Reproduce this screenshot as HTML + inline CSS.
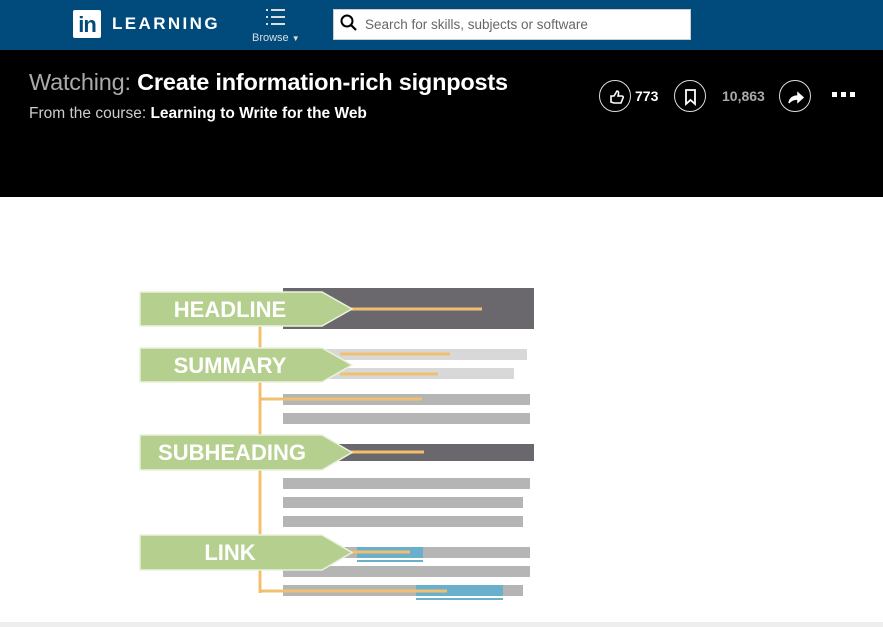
<!DOCTYPE html>
<html><head><style>
*{margin:0;padding:0;box-sizing:border-box}
body{width:883px;height:627px;overflow:hidden;background:#fff;font-family:"Liberation Sans",sans-serif;position:relative}
.hdr{position:absolute;left:0;top:0;width:883px;height:50px;background:#004b7c}
.blk{position:absolute;left:0;top:50px;width:883px;height:147px;background:#000}
.a{position:absolute}
.circ{position:absolute;width:32px;height:32px;border:1px solid #ddd;border-radius:50%;top:80px}
</style></head><body>
<div class="hdr">
  <div class="a" style="left:73px;top:10px;width:28px;height:28px;background:#fff;border-radius:2px;color:#004b7c;font-weight:bold;font-size:22px;line-height:30px;text-align:center;letter-spacing:-1px">in</div>
  <div class="a" style="left:112px;top:14px;color:#fff;font-size:17px;font-weight:bold;letter-spacing:2.4px">LEARNING</div>
  <svg class="a" style="left:266px;top:8px" width="20" height="18"><g fill="#ddd"><rect x="0" y="1" width="2" height="2"/><rect x="5" y="1" width="14" height="2"/><rect x="0" y="8" width="2" height="2"/><rect x="5" y="8" width="14" height="2"/><rect x="0" y="15" width="2" height="2"/><rect x="5" y="15" width="14" height="2"/></g></svg>
  <div class="a" style="left:252px;top:32px;color:#ddd;font-size:11px">Browse <span style="font-size:8px">▼</span></div>
  <div class="a" style="left:333px;top:9px;width:358px;height:31px;background:#fff;border:1px solid #ccc"></div>
  <svg class="a" style="left:340px;top:14px" width="18" height="18"><circle cx="7" cy="7" r="5.5" stroke="#000" stroke-width="2" fill="none"/><line x1="11" y1="11" x2="16" y2="16" stroke="#000" stroke-width="2.2"/></svg>
  <div class="a" style="left:365px;top:17px;color:#666;font-size:13.5px">Search for skills, subjects or software</div>
</div>
<div class="blk">
  <div class="a" style="left:29px;top:19px;font-size:23.5px;font-weight:bold;color:#fff;letter-spacing:-0.2px"><span style="color:#aaa;font-weight:normal">Watching:</span> Create information-rich signposts</div>
  <div class="a" style="left:29px;top:55px;font-size:15.5px;color:#ccc">From the course: <b style="color:#fff">Learning to Write for the Web</b></div>
</div>
<div class="circ" style="left:599px"><svg width="32" height="32"><path d="M11 15h3l3-5c1 0 2 1 1.5 3l-.5 2h4c1 0 1.5 1 1 2l-2 5h-7l-3-1z" stroke="#fff" stroke-width="1.6" fill="none"/></svg></div>
<div class="a" style="left:635px;top:88px;color:#fff;font-weight:bold;font-size:14px">773</div>
<div class="circ" style="left:674px"><svg width="32" height="32"><path d="M11 9h9v14l-4.5-4-4.5 4z" stroke="#fff" stroke-width="1.8" fill="none"/></svg></div>
<div class="a" style="left:722px;top:88px;color:#aaa;font-weight:bold;font-size:14px">10,863</div>
<div class="circ" style="left:779px"><svg width="32" height="32"><path d="M9 22c1-5 4-7 9-7v-3l5 4.5-5 4.5v-3c-4 0-7 1-9 4z" stroke="#fff" stroke-width="1.5" fill="#fff"/></svg></div>
<svg class="a" style="left:832px;top:92px" width="24" height="6"><rect x="0" y="0" width="5" height="5" fill="#fff"/><rect x="9" y="0" width="5" height="5" fill="#fff"/><rect x="18" y="0" width="5" height="5" fill="#fff"/></svg>

<svg class="a" style="left:0;top:0" width="883" height="627">
<g font-family="Liberation Sans" font-weight="bold" font-size="22" fill="#fff">
<rect x="283" y="288" width="251" height="41" fill="#6b686d"/>
<rect x="283" y="349" width="244" height="11" fill="#d8d8d8"/>
<rect x="283" y="368" width="231" height="11" fill="#d8d8d8"/>
<rect x="283" y="394" width="247" height="11" fill="#b5b5b5"/>
<rect x="283" y="413" width="247" height="11" fill="#b5b5b5"/>
<rect x="283" y="444" width="251" height="17" fill="#6b686d"/>
<rect x="283" y="478" width="247" height="11" fill="#b5b5b5"/>
<rect x="283" y="497" width="240" height="11" fill="#b5b5b5"/>
<rect x="283" y="516" width="240" height="11" fill="#b5b5b5"/>
<rect x="283" y="547" width="247" height="11" fill="#b5b5b5"/>
<rect x="357" y="547" width="66" height="11" fill="#6aafcc"/>
<rect x="357" y="560" width="66" height="2" fill="#6aafcc"/>
<rect x="283" y="566" width="247" height="11" fill="#b5b5b5"/>
<rect x="283" y="585" width="240" height="11" fill="#b5b5b5"/>
<rect x="416" y="585" width="87" height="11" fill="#6aafcc"/>
<rect x="416" y="598" width="87" height="2" fill="#6aafcc"/>
<g stroke="#f0c070" stroke-width="3" fill="none">
<line x1="260" y1="326" x2="260" y2="593"/>
<line x1="340" y1="309" x2="482" y2="309"/>
<line x1="340" y1="354" x2="450" y2="354"/>
<line x1="340" y1="374" x2="438" y2="374"/>
<line x1="260" y1="399" x2="422" y2="399"/>
<line x1="340" y1="452" x2="424" y2="452"/>
<line x1="340" y1="552" x2="410" y2="552"/>
<line x1="260" y1="591" x2="447" y2="591"/>
</g>
<g fill="#b5d08e" stroke="#eaf2dc" stroke-width="1.5">
<path d="M140 292h182l30 17-30 17h-182z"/>
<path d="M140 348h182l30 17-30 17h-182z"/>
<path d="M140 435h182l30 17.5-30 17.5h-182z"/>
<path d="M140 535h182l30 17.5-30 17.5h-182z"/>
</g>
<text x="230" y="317" text-anchor="middle">HEADLINE</text>
<text x="230" y="373" text-anchor="middle">SUMMARY</text>
<text x="232" y="460" text-anchor="middle">SUBHEADING</text>
<text x="230" y="560" text-anchor="middle">LINK</text>
</g>
<rect x="0" y="622" width="883" height="5" fill="#eee"/>
</svg>
</body></html>
